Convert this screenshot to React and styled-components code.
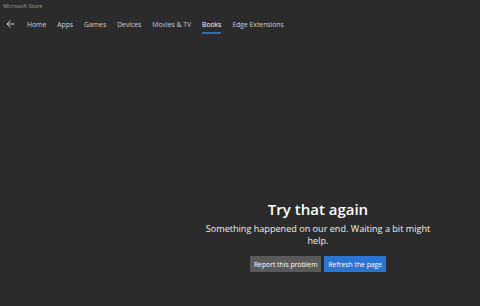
import React from "react";
import styled, { createGlobalStyle } from "styled-components";

const Global = createGlobalStyle`
  html, body { margin: 0; padding: 0; background: #2b2b2b; }
  body { font-family: "Open Sans", "Noto Sans", sans-serif; }
  * { box-sizing: border-box; }
`;

const Page = styled.div`
  width: 480px;
  height: 306px;
  background: #2b2b2b;
  display: flex;
  flex-direction: column;
  overflow: hidden;
`;

const TitleBar = styled.div`
  height: 11px;
  padding-left: 3px;
  display: flex;
  align-items: center;
  font-size: 5.5px;
  color: #9a9a9a;
`;

const Nav = styled.nav`
  height: 26px;
  display: flex;
  align-items: center;
  padding-left: 5px;
`;

const Back = styled.button`
  background: none;
  border: none;
  padding: 0;
  width: 10px;
  height: 10px;
  margin-right: 12px;
  display: flex;
  align-items: center;
  justify-content: center;
  color: #d0d0d0;
`;

const Tabs = styled.div`
  display: flex;
  gap: 11px;
  height: 100%;
`;

const Tab = styled.a`
  position: relative;
  display: flex;
  align-items: center;
  font-size: 6.8px;
  color: ${(p) => (p.$active ? "#ffffff" : "#cfcfcf")};
  text-decoration: none;
  white-space: nowrap;
  &::after {
    content: "";
    display: ${(p) => (p.$active ? "block" : "none")};
    position: absolute;
    left: 0;
    right: 0;
    bottom: 3px;
    height: 2px;
    background: #2f6fb6;
  }
`;

const Main = styled.main`
  flex: 1;
  display: flex;
  justify-content: center;
  padding-left: 156px;
  padding-top: 161px;
`;

const ErrorBox = styled.div`
  width: 240px;
  display: flex;
  flex-direction: column;
  align-items: center;
  text-align: center;
  color: #fff;
`;

const Heading = styled.h1`
  margin: 0;
  font-size: 15px;
  font-weight: 600;
  line-height: 22px;
`;

const Message = styled.p`
  margin: 3px 0 0;
  font-size: 9.1px;
  line-height: 12px;
  color: #f0f0f0;
`;

const Actions = styled.div`
  display: flex;
  gap: 3px;
  margin-top: 9px;
`;

const Button = styled.button`
  height: 16px;
  border: none;
  padding: 0 4px;
  font-family: inherit;
  font-size: 6.8px;
  color: #fff;
  background: ${(p) => (p.$primary ? "#2a74d3" : "#5a5a5a")};
`;

export default function App() {
  return (
    <Page>
      <Global />
      <TitleBar>Microsoft Store</TitleBar>
      <Nav>
        <Back aria-label="Back">
          <svg width="9" height="8" viewBox="0 0 9 8" fill="none" stroke="currentColor" strokeWidth="1">
            <path d="M8.5 4H1M4.5 0.5L1 4l3.5 3.5" />
          </svg>
        </Back>
        <Tabs>
          <Tab>Home</Tab>
          <Tab>Apps</Tab>
          <Tab>Games</Tab>
          <Tab>Devices</Tab>
          <Tab>Movies &amp; TV</Tab>
          <Tab $active>Books</Tab>
          <Tab>Edge Extensions</Tab>
        </Tabs>
      </Nav>
      <Main>
        <ErrorBox>
          <Heading>Try that again</Heading>
          <Message>Something happened on our end. Waiting a bit might help.</Message>
          <Actions>
            <Button>Report this problem</Button>
            <Button $primary>Refresh the page</Button>
          </Actions>
        </ErrorBox>
      </Main>
    </Page>
  );
}
